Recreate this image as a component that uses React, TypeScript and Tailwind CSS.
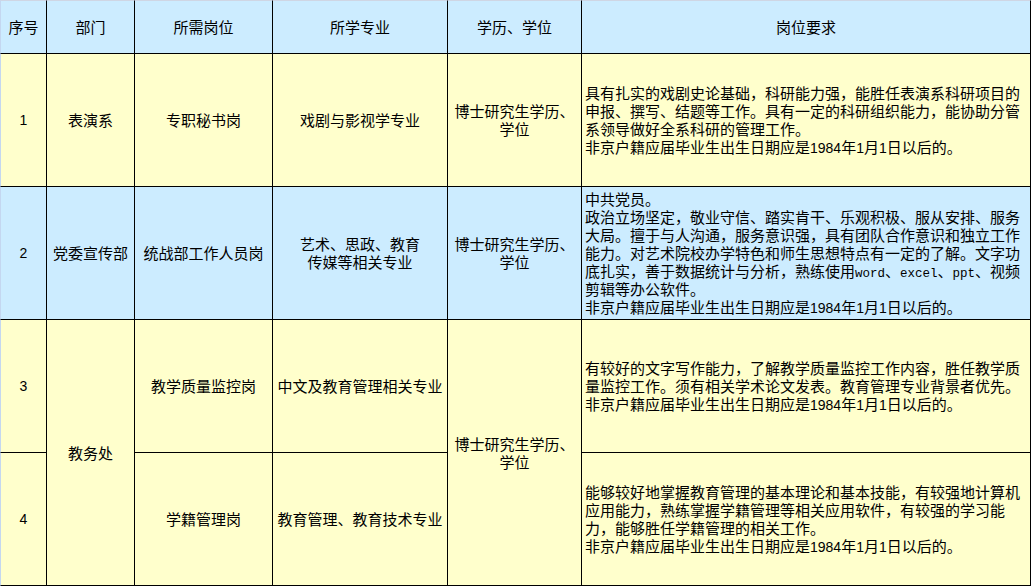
import type { ReactNode } from 'react'

const font = { fontFamily: '"Noto Sans CJK SC", "Noto Sans", sans-serif' }

const BLUE = 'bg-[#ccecff]'
const YELLOW = 'bg-[#ffffcc]'

function Cell({
  children,
  bg,
  className = '',
  left = false,
}: {
  children?: ReactNode
  bg: string
  className?: string
  left?: boolean
}) {
  return (
    <div
      className={`flex items-center border-r border-b border-black text-[15px] leading-[18px] text-black ${bg} ${
        left ? 'justify-start pl-[3px] text-left' : 'justify-center text-center'
      } ${className}`}
    >
      {children}
    </div>
  )
}

function Lines({ lines }: { lines: ReactNode[] }) {
  return (
    <div className="flex flex-col">
      {lines.map((l, i) => (
        <span key={i} className="block h-[18px] whitespace-nowrap">
          {l}
        </span>
      ))}
    </div>
  )
}

const Mono = ({ children }: { children: ReactNode }) => (
  <span className="font-['Liberation_Mono'] text-[12.5px] leading-none">{children}</span>
)

const Num = ({ children }: { children: ReactNode }) => (
  <span className="font-['Liberation_Sans'] text-[14px] leading-none">{children}</span>
)

const dateLine = (
  <>
    非京户籍应届毕业生出生日期应是<Num>1984</Num>年<Num>1</Num>月<Num>1</Num>日以后的。
  </>
)

export default function App() {
  const first = 'border-l border-l-[#c4d7f0]'
  const head = 'border-t border-t-[#cfd6e4]'

  return (
    <div
      style={font}
      className="grid w-[1031px] h-[586px] grid-cols-[47px_88px_138px_175px_134px_449px] grid-rows-[54px_133px_133px_133px_133px]"
    >
      {/* header */}
      <Cell bg={BLUE} className={`${first} ${head}`}>序号</Cell>
      <Cell bg={BLUE} className={head}>部门</Cell>
      <Cell bg={BLUE} className={head}>所需岗位</Cell>
      <Cell bg={BLUE} className={head}>所学专业</Cell>
      <Cell bg={BLUE} className={head}>学历、学位</Cell>
      <Cell bg={BLUE} className={head}>岗位要求</Cell>

      {/* row 1 */}
      <Cell bg={YELLOW} className={first}><Num>1</Num></Cell>
      <Cell bg={YELLOW}>表演系</Cell>
      <Cell bg={YELLOW}>专职秘书岗</Cell>
      <Cell bg={YELLOW}>戏剧与影视学专业</Cell>
      <Cell bg={YELLOW}>
        <Lines lines={['博士研究生学历、', '学位']} />
      </Cell>
      <Cell bg={YELLOW} left>
        <Lines
          lines={[
            '具有扎实的戏剧史论基础，科研能力强，能胜任表演系科研项目的',
            '申报、撰写、结题等工作。具有一定的科研组织能力，能协助分管',
            '系领导做好全系科研的管理工作。',
            dateLine,
          ]}
        />
      </Cell>

      {/* row 2 */}
      <Cell bg={BLUE} className={first}><Num>2</Num></Cell>
      <Cell bg={BLUE}>党委宣传部</Cell>
      <Cell bg={BLUE}>统战部工作人员岗</Cell>
      <Cell bg={BLUE}>
        <Lines lines={['艺术、思政、教育', '传媒等相关专业']} />
      </Cell>
      <Cell bg={BLUE}>
        <Lines lines={['博士研究生学历、', '学位']} />
      </Cell>
      <Cell bg={BLUE} left>
        <Lines
          lines={[
            '中共党员。',
            '政治立场坚定，敬业守信、踏实肯干、乐观积极、服从安排、服务',
            '大局。擅于与人沟通，服务意识强，具有团队合作意识和独立工作',
            '能力。对艺术院校办学特色和师生思想特点有一定的了解。文字功',
            <>
              底扎实，善于数据统计与分析，熟练使用<Mono>word</Mono>、<Mono>excel</Mono>、<Mono>ppt</Mono>、视频
            </>,
            '剪辑等办公软件。',
            dateLine,
          ]}
        />
      </Cell>

      {/* rows 3 + 4 */}
      <Cell bg={YELLOW} className={first}><Num>3</Num></Cell>
      <Cell bg={YELLOW} className="row-span-2">教务处</Cell>
      <Cell bg={YELLOW}>教学质量监控岗</Cell>
      <Cell bg={YELLOW}>中文及教育管理相关专业</Cell>
      <Cell bg={YELLOW} className="row-span-2">
        <Lines lines={['博士研究生学历、', '学位']} />
      </Cell>
      <Cell bg={YELLOW} left>
        <Lines
          lines={[
            '有较好的文字写作能力，了解教学质量监控工作内容，胜任教学质',
            '量监控工作。须有相关学术论文发表。教育管理专业背景者优先。',
            dateLine,
          ]}
        />
      </Cell>

      <Cell bg={YELLOW} className={first}><Num>4</Num></Cell>
      <Cell bg={YELLOW}>学籍管理岗</Cell>
      <Cell bg={YELLOW}>教育管理、教育技术专业</Cell>
      <Cell bg={YELLOW} left>
        <Lines
          lines={[
            '能够较好地掌握教育管理的基本理论和基本技能，有较强地计算机',
            '应用能力，熟练掌握学籍管理等相关应用软件，有较强的学习能',
            '力，能够胜任学籍管理的相关工作。',
            dateLine,
          ]}
        />
      </Cell>
    </div>
  )
}
